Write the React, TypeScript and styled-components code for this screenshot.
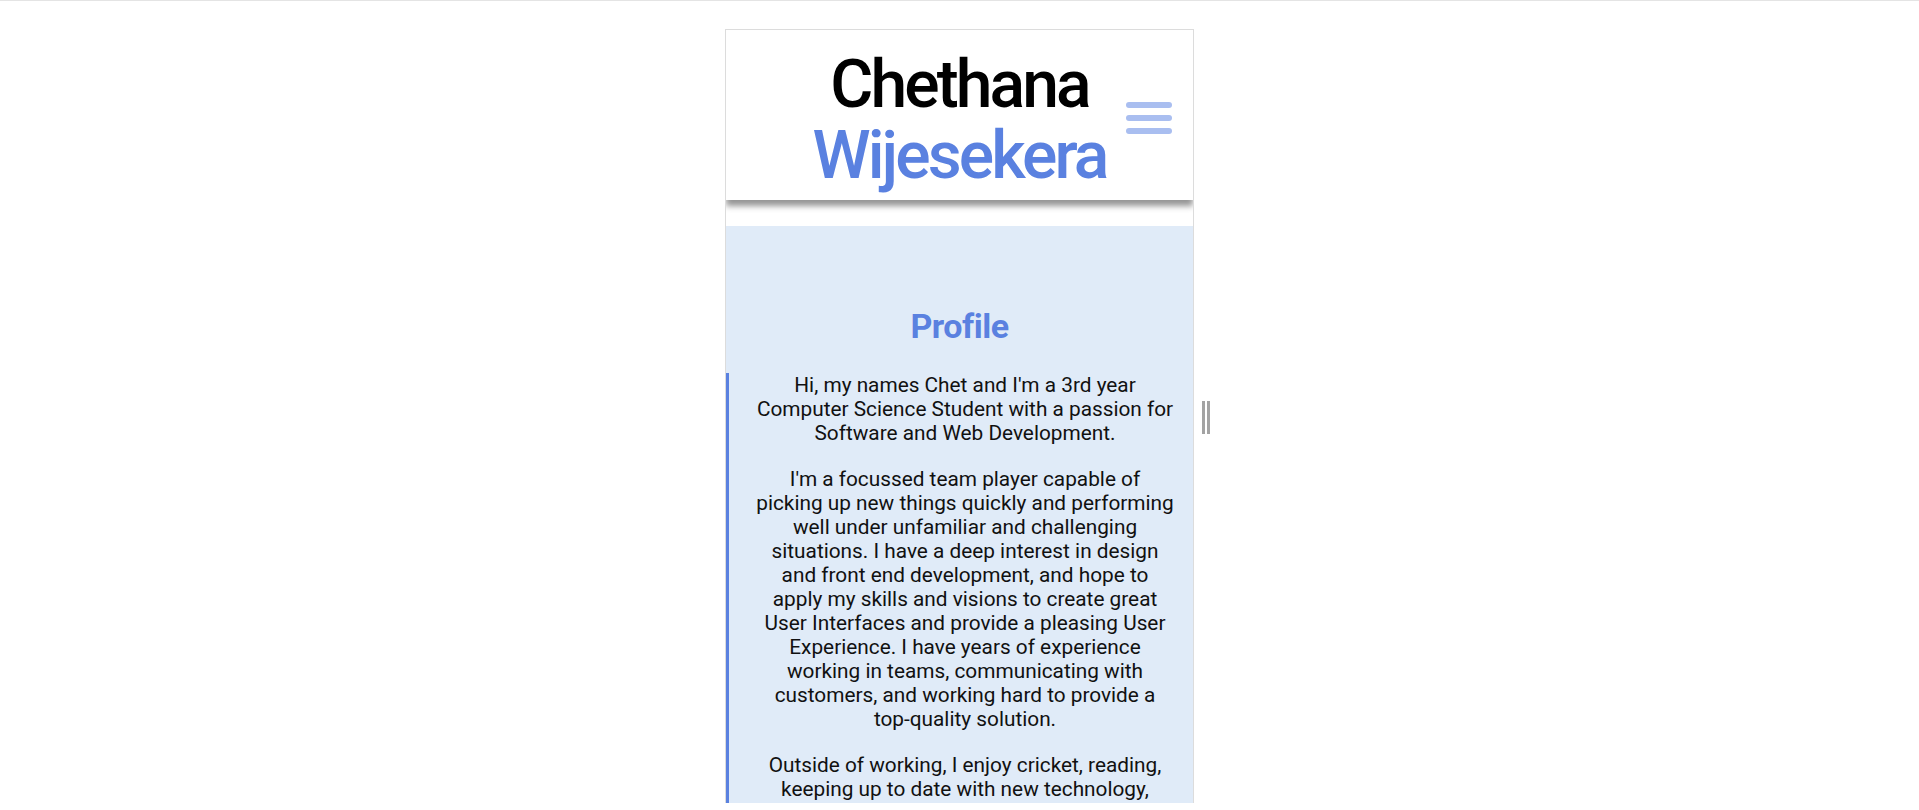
import React from "react";
import styled, { createGlobalStyle } from "styled-components";

const GlobalStyle = createGlobalStyle`
  html, body {
    margin: 0;
    padding: 0;
    background: #ffffff;
    font-family: Roboto, "Noto Sans", Arial, sans-serif;
  }
  * { box-sizing: border-box; }
`;

const Page = styled.div`
  width: 100%;
  height: 810px;
  overflow: hidden;
  background: #ffffff;
`;

const TopRule = styled.div`
  height: 1px;
  background: #e4e4e4;
`;

const Stage = styled.div`
  display: grid;
  grid-template-columns: 1fr 469px 1fr;
  padding-top: 28px;
`;

const Viewport = styled.div`
  grid-column: 2;
  height: 774px;
  border: 1px solid #dcdcdc;
  border-bottom: none;
  background: #ffffff;
  overflow: hidden;
  display: flex;
  flex-direction: column;
`;

const ResizeHandle = styled.div`
  grid-column: 3;
  align-self: center;
  display: flex;
  gap: 2px;
  margin-left: 8px;
  margin-top: 2px;
`;

const HandleBar = styled.span`
  width: 3px;
  height: 33px;
  background: #a3a3a3;
`;

const Header = styled.header`
  position: relative;
  z-index: 1;
  flex: none;
  height: 170px;
  background: #ffffff;
  box-shadow: 0 6px 6px rgba(0, 0, 0, 0.42);
  padding-top: 19px;
  text-align: center;
`;

const Name = styled.h1`
  margin: 0;
  font-size: 66px;
  font-weight: 500;
  line-height: 71px;
  letter-spacing: -2.9px;
`;

const NameLine = styled.span<{ $accent?: boolean }>`
  display: block;
  color: ${(p) => (p.$accent ? "#5a81e0" : "#000000")};
`;

const MenuButton = styled.button`
  position: absolute;
  right: 21px;
  top: 72px;
  display: flex;
  flex-direction: column;
  gap: 7.5px;
  padding: 0;
  border: none;
  background: transparent;
  cursor: pointer;
`;

const MenuBar = styled.span`
  display: block;
  width: 46px;
  height: 5.5px;
  border-radius: 3px;
  background: #a9bef0;
`;

const Section = styled.main`
  flex: 1;
  margin-top: 26px;
  background: #e0ebf8;
  padding-top: 80px;
`;

const SectionTitle = styled.h2`
  margin: 0 0 27px;
  text-align: center;
  font-size: 34px;
  font-weight: 700;
  line-height: 40px;
  letter-spacing: -0.5px;
  color: #5a81e0;
`;

const Body = styled.div`
  border-left: 3px solid #5a81e0;
  padding: 0 18px 0 26px;
`;

const Paragraph = styled.p`
  margin: 0 0 22px;
  font-size: 20.8px;
  line-height: 24px;
  text-align: center;
  color: #111111;
`;

export default function App() {
  return (
    <>
      <GlobalStyle />
      <Page>
        <TopRule />
        <Stage>
          <Viewport>
            <Header>
              <Name>
                <NameLine>Chethana</NameLine>
                <NameLine $accent>Wijesekera</NameLine>
              </Name>
              <MenuButton aria-label="Open menu">
                <MenuBar />
                <MenuBar />
                <MenuBar />
              </MenuButton>
            </Header>
            <Section>
              <SectionTitle>Profile</SectionTitle>
              <Body>
                <Paragraph>
                  Hi, my names Chet and I'm a 3rd year Computer Science Student with a passion for Software and Web Development.
                </Paragraph>
                <Paragraph>
                  I'm a focussed team player capable of picking up new things quickly and performing well under unfamiliar and challenging situations. I have a deep interest in design and front end development, and hope to apply my skills and visions to create great User Interfaces and provide a pleasing User Experience. I have years of experience working in teams, communicating with customers, and working hard to provide a top-quality solution.
                </Paragraph>
                <Paragraph>
                  Outside of working, I enjoy cricket, reading, keeping up to date with new technology, watching films and spending time with friends.
                </Paragraph>
              </Body>
            </Section>
          </Viewport>
          <ResizeHandle>
            <HandleBar />
            <HandleBar />
          </ResizeHandle>
        </Stage>
      </Page>
    </>
  );
}
